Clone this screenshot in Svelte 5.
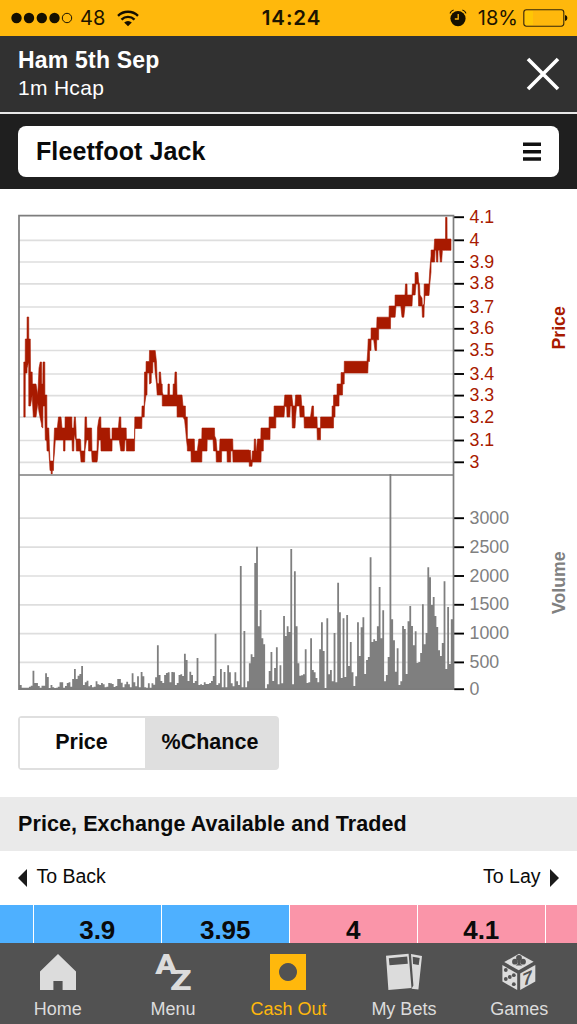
<script>
  const runner = 'Fleetfoot Jack';

  const priceTicks = [
    { label: '4.1', y: 28.2 },
    { label: '4', y: 51.3 },
    { label: '3.9', y: 73 },
    { label: '3.8', y: 94.8 },
    { label: '3.7', y: 118 },
    { label: '3.6', y: 139.8 },
    { label: '3.5', y: 161.5 },
    { label: '3.4', y: 185 },
    { label: '3.3', y: 206.6 },
    { label: '3.2', y: 228.2 },
    { label: '3.1', y: 251.5 },
    { label: '3', y: 273.3 }
  ];

  const volumeTicks = [
    { label: '3000', y: 329.2 },
    { label: '2500', y: 358.2 },
    { label: '2000', y: 387 },
    { label: '1500', y: 415.8 },
    { label: '1000', y: 444.6 },
    { label: '500', y: 473.4 },
    { label: '0', y: 500.2 }
  ];

  // x, high, low of the traded price band
  const band = [
    [23.8, 362, 417], [25.2, 362, 417], [25.3, 339, 373], [27, 339, 373], [27.1, 317, 368], [28.7, 317, 362],
    [28.8, 339, 406], [30.3, 339, 406], [30.5, 372, 406], [32.2, 372, 395], [32.4, 384, 400], [33.3, 384, 417],
    [36, 384, 417], [37.8, 395, 403], [39, 368, 412], [40.2, 362, 418], [41.5, 362, 424], [41.7, 384, 427],
    [42.8, 384, 428], [43, 362, 406], [44.8, 362, 406], [44.9, 395, 418], [45.3, 395, 440], [46.8, 395, 441],
    [47, 428, 451], [48.8, 428, 451], [49.5, 450, 461], [50, 461, 470.5], [51.1, 461, 470.5], [51.2, 461, 474],
    [52.2, 461, 474], [52.3, 461, 470.5], [53.5, 461, 470.5], [53.6, 450, 462], [54.5, 428, 452], [55.3, 428, 440],
    [57.3, 428, 440], [58.5, 417, 440], [61, 417, 440], [62, 428, 440], [63.4, 428, 440], [63.5, 428, 451],
    [65, 428, 451], [65.1, 417, 440], [71.8, 417, 440], [72, 428, 440], [72.3, 428, 451], [73.8, 428, 451],
    [74, 422, 440], [74.4, 417, 434], [75.4, 417, 439], [76, 428, 440], [76.3, 439, 451], [80, 439, 451],
    [80.6, 440, 456], [81, 451, 462], [84.5, 451, 462], [84.7, 439, 462], [85, 417, 450], [86.5, 417, 440],
    [86.8, 428, 440], [88.5, 428, 440], [88.6, 428, 451], [91.6, 428, 451], [92, 451, 460], [92.3, 451, 462],
    [97, 451, 462], [97.5, 428, 459], [98.7, 420, 440], [99.5, 417, 440], [100.8, 417, 440], [101, 428, 451],
    [109.7, 428, 451], [110, 439, 451], [112, 439, 451], [112.1, 428, 440], [118.4, 428, 440], [119.3, 417, 440],
    [120.8, 417, 451], [121, 428, 451], [124.3, 428, 451], [125, 428, 440], [126.2, 428, 440], [126.4, 439, 451],
    [134.5, 439, 451], [134.8, 417, 428.5], [141.8, 417, 428.5], [142, 406, 417], [144.2, 406, 417], [144.5, 372, 406],
    [146, 372, 395], [146.1, 361.5, 395], [147, 361.5, 395], [147.2, 361.5, 373], [149.3, 361.5, 373], [149.5, 350.5, 384],
    [151.2, 350.5, 383], [151.3, 350.5, 373], [152.7, 350.5, 373], [152.9, 350.5, 362], [154.5, 350.5, 362],
    [155.2, 350.5, 373], [156.5, 362, 384], [157.2, 383, 395], [159, 384, 395], [159.2, 372, 395], [160.5, 372, 395],
    [161.3, 384, 395], [162.2, 384, 395], [162.3, 392, 406], [163.2, 395, 406], [167.8, 395, 406], [168, 384, 406],
    [169.4, 384, 406], [169.6, 395, 406], [173, 395, 406], [173.2, 384, 406], [174.6, 384, 406], [175, 372, 406],
    [176.5, 372, 406], [177, 395, 406], [177.1, 395, 417], [182, 395, 417], [183, 406, 417], [184.6, 406, 420],
    [185.4, 406, 428], [185.5, 417, 428], [186.4, 417, 439], [187.3, 417, 447], [187.4, 439, 451], [191, 439, 451],
    [191.2, 439, 462], [194.3, 439, 462], [194.6, 451, 462], [197.3, 451, 462], [198.8, 439, 462], [201.8, 439, 462],
    [202, 428, 451], [207, 428, 451], [207.2, 428, 439.5], [213, 428, 439.5], [213.6, 428, 451], [214.5, 428, 451],
    [214.7, 436, 451], [216, 439, 451], [216.3, 442, 462], [217, 451, 462], [219.5, 451, 462], [220, 439, 462],
    [221.5, 439, 462], [221.7, 439, 451], [227, 439, 451], [227.2, 439, 462], [230.7, 439, 462], [230.8, 439, 451],
    [232.7, 439, 451], [233, 450, 462], [249.2, 450, 462], [249.3, 451, 466.3], [250.3, 450, 466.3], [251, 460, 466.3],
    [252, 460, 466.3], [252.3, 451, 462], [254, 451, 462], [254.3, 439, 462], [255.6, 439, 462], [256, 451, 462],
    [256.4, 451, 462], [257.5, 439, 462], [260.8, 439, 462], [261, 428, 462], [261.2, 428, 451], [263.3, 428, 451],
    [263.4, 428, 439.5], [269, 428, 439.5], [269.1, 417, 439.5], [270, 417, 439.5], [270.1, 417, 428], [274, 417, 428],
    [274.1, 406, 428], [275.8, 406, 428], [275.9, 406, 417], [284, 406, 417], [284.8, 395, 406], [286.7, 395, 407],
    [287, 395, 417], [289.8, 395, 417], [290.3, 395, 406], [291.8, 395, 406], [292.3, 400, 428], [293, 406, 428],
    [295, 406, 428], [295.6, 395, 417], [296.5, 395, 406], [299.5, 395, 406], [300, 395, 417], [301, 395, 417],
    [301.8, 406, 417], [304, 406, 417], [304.3, 417, 428], [310.5, 417, 428], [312, 406, 428], [313.5, 406, 428],
    [313.7, 417, 428], [317, 417, 428], [317.3, 428, 439.8], [320.5, 428, 439.8], [320.6, 417, 428],
    [332, 417, 428], [332.1, 406, 428], [333.5, 406, 428], [333.6, 395, 417], [335, 395, 417], [335.1, 395, 406],
    [337, 395, 406], [337.1, 384, 406], [339, 384, 406], [339.1, 384, 395], [341, 384, 395], [341.1, 372.5, 395],
    [342.5, 372.5, 395], [342.7, 372.5, 384], [344.2, 372.5, 384], [344.3, 361.3, 373], [367, 361.3, 373],
    [367.8, 350, 373], [368.2, 339, 361.5], [369.5, 339, 361.5], [369.6, 339, 350.5], [371, 339, 350.5],
    [371.1, 328, 339.8], [373.7, 328, 339.8], [375, 328, 350.5], [376.6, 328, 350.5], [376.7, 328, 339.8],
    [377, 317.2, 339.8], [378.6, 317.2, 339.8], [378.7, 317.2, 328.7], [389, 317.2, 328.7], [389.2, 306, 328.7],
    [390.5, 306, 328.7], [390.6, 306, 317.2], [395, 306, 317.2], [395.1, 295, 317.2], [396, 295, 306],
    [400.8, 295, 306], [402, 295, 317.2], [403.8, 295, 317.2], [405, 295, 306],
    [405.5, 284, 306], [407, 284, 306], [407.2, 295, 306], [412, 295, 306], [412.5, 284, 295], [415, 284, 295],
    [415.1, 272.5, 295], [416, 272.5, 284], [418, 272.5, 284], [418.6, 282, 306], [419.5, 284, 306], [420, 295, 306],
    [422, 298, 306], [422.4, 306, 317.2], [424, 304, 317.2], [424.2, 284, 306], [425, 284, 295.5], [429, 284, 295.5],
    [429.8, 270, 284], [431, 256, 272], [431.1, 250, 262], [434, 250, 262], [434.6, 239, 262], [435, 239, 250.3],
    [436, 239, 250.3], [436.6, 239, 262], [437.8, 239, 262], [438.1, 239, 250.3], [439.5, 239, 250.3], [440.3, 239, 262],
    [441.6, 239, 262], [442.4, 239, 250.3], [445.5, 239, 250.3], [445.6, 217.3, 250.3], [447, 217.3, 250.3],
    [447.1, 239, 250.3], [451, 239, 250.3]
  ];

  const volumes = [
    12, 12, 4, 4, 4, 4, 7, 10, 55, 18, 18, 9, 4, 10, 10, 47, 36, 3, 12, 5,
    3, 4, 7, 20, 20, 4, 9, 18, 20, 7, 30, 60, 30, 40, 45, 69, 12, 20, 25, 8,
    12, 5, 7, 23, 14, 12, 18, 14, 5, 7, 18, 17, 15, 6, 9, 30, 30, 19, 5, 14,
    22, 14, 5, 47, 20, 8, 38, 5, 51, 38, 5, 4, 17, 4, 17, 13, 35, 131, 42, 24,
    18, 42, 48, 50, 20, 51, 50, 12, 18, 42, 44, 39, 106, 87, 24, 52, 42, 18, 24, 93,
    12, 14, 12, 20, 15, 15, 18, 24, 39, 166, 12, 17, 60, 5, 51, 5, 71, 50, 17, 8,
    50, 23, 12, 369, 5, 174, 5, 23, 77, 104, 96, 378, 427, 188, 237, 152, 134, 0, 14, 54,
    111, 24, 63, 125, 14, 71, 17, 219, 159, 188, 171, 420, 14, 353, 188, 77, 40, 41, 44, 119,
    18, 20, 152, 57, 50, 33, 20, 119, 200, 114, 3, 212, 44, 57, 23, 168, 20, 319, 230, 33,
    212, 36, 222, 69, 141, 50, 9, 38, 200, 99, 185, 215, 45, 87, 96, 395, 141, 149, 144, 188,
    306, 152, 236, 23, 42, 96, 645, 209, 146, 52, 122, 12, 23, 189, 180, 45, 203, 249, 189, 131,
    173, 78, 81, 108, 254, 134, 168, 365, 335, 252, 276, 219, 186, 116, 99, 138, 323, 60, 246, 75,
    209, 209
  ];

  const top = 189;
  const base = 500;
  const step = 1.803;

  const pricePath =
    'M' + band.map(([x, high]) => `${x} ${high - top}`).join('L') +
    'L' + [...band].reverse().map(([x, , low]) => `${x} ${low - top}`).join('L') + 'Z';

  const volumePath =
    `M19 ${base}` +
    volumes
      .map((v, i) => {
        const left = Math.max(19, 19 + (i - 0.5) * step);
        const right = Math.min(453.5, 19 + (i + 0.5) * step);
        return `L${left.toFixed(2)} ${(base - v / 3).toFixed(2)}H${right.toFixed(2)}`;
      })
      .join('') +
    `V${base}Z`;

  const prices = [
    { value: '', side: 'back' },
    { value: '3.9', side: 'back' },
    { value: '3.95', side: 'back' },
    { value: '4', side: 'lay' },
    { value: '4.1', side: 'lay' },
    { value: '', side: 'lay' }
  ];

  const tabs = ['Home', 'Menu', 'Cash Out', 'My Bets', 'Games'];

  let mode = $state('Price');
  let active = $state('Cash Out');
</script>

<div class="screen">
  <div class="status">
    <div class="signal">
      <svg width="62" height="14" viewBox="0 0 62 14">
        {#each [5.5, 18, 30.8, 43.5] as cx}
          <circle {cx} cy="7" r="5.2" />
        {/each}
        <circle cx="56" cy="7" r="4.7" fill="none" stroke="#1c1400" />
      </svg>
      <span>48</span>
      <svg class="wifi" width="22" height="17" viewBox="0 0 22 17">
        <g fill="none" stroke="#150f00" stroke-width="2.4">
          <path d="M1 5.8a14.3 14.3 0 0 1 20 0" />
          <path d="M4.5 9.6a9.2 9.2 0 0 1 13 0" />
        </g>
        <path d="M7.2 12.5a5.4 5.4 0 0 1 7.6 0L11 16.3z" />
      </svg>
    </div>
    <strong>14:24</strong>
    <div class="power">
      <svg width="18" height="18" viewBox="0 0 18 18">
        <circle cx="9" cy="9.6" r="7.6" />
        <path d="M1 4.4Q1.8 1.8 4.6 1M17 4.4Q16.2 1.8 13.4 1" fill="none" stroke="#150f00" stroke-width="1.2" />
        <path d="M9.2 5v5H5.8" fill="none" stroke="#ffb80c" stroke-width="1.3" />
      </svg>
      <span>18%</span>
      <svg width="45" height="18" viewBox="0 0 45 18">
        <rect x="2" y="2" width="8" height="14" fill="#ffc605" />
        <rect x=".8" y=".8" width="40" height="16.4" rx="2.6" fill="none" stroke="#35270a" stroke-width="1.1" />
        <path d="M42 6q2.4.4 2.4 3T42 12z" />
      </svg>
    </div>
  </div>

  <header>
    <div>
      <h1>Ham 5th Sep</h1>
      <p>1m Hcap</p>
    </div>
    <button class="close" aria-label="Close">
      <svg width="34" height="34" viewBox="0 0 34 34">
        <path d="M2 2l30 30M32 2L2 32" stroke="#fff" stroke-width="3.6" />
      </svg>
    </button>
  </header>

  <div class="picker">
    <button class="runner">
      {runner}
      <svg width="18" height="20" viewBox="0 0 18 20">
        <path d="M0 2.3h18M0 9.7h18M0 17h18" stroke="#111" stroke-width="3.5" />
      </svg>
    </button>
  </div>

  <svg class="chart" width="577" height="527" viewBox="0 0 577 527">
    <g stroke="#dedede" stroke-width="1.7">
      {#each [...priceTicks.slice(1), ...volumeTicks.slice(0, -1)] as tick}
        <line x1="19" x2="453" y1={tick.y} y2={tick.y} />
      {/each}
    </g>
    <path d={volumePath} fill="#7f7f7f" />
    <path d={pricePath} fill="#a81a00" stroke="#a81a00" stroke-width=".6" />
    <path d="M19 26.6H453.5V500.2H19ZM19 286H453.5" fill="none" stroke="#7d7d7d" stroke-width="1.7" />
    <g stroke="#000" stroke-width="1.9">
      {#each [...priceTicks, ...volumeTicks] as tick}
        <line x1="454.2" x2="464" y1={tick.y} y2={tick.y} />
      {/each}
    </g>
    <g class="price">
      {#each priceTicks as tick}
        <text x="469.5" y={tick.y + 5.5}>{tick.label}</text>
      {/each}
      <text class="axis" transform="translate(564.5 160.5) rotate(-90)">Price</text>
    </g>
    <g class="volume">
      {#each volumeTicks as tick}
        <text x="469.5" y={tick.y + 5.5}>{tick.label}</text>
      {/each}
      <text class="axis" transform="translate(564.5 425) rotate(-90)">Volume</text>
    </g>
  </svg>

  <div class="toggle">
    {#each ['Price', '%Chance'] as option}
      <button class:selected={mode === option} onclick={() => (mode = option)}>{option}</button>
    {/each}
  </div>

  <h2>Price, Exchange Available and Traded</h2>

  <div class="directions">
    <span>
      <svg width="9" height="18" viewBox="0 0 9 18"><path d="M9 0v18L0 9z" /></svg>
      To Back
    </span>
    <span>
      To Lay
      <svg width="9" height="18" viewBox="0 0 9 18"><path d="M0 0v18l9-9z" /></svg>
    </span>
  </div>

  <div class="prices">
    {#each prices as price}
      <div class={price.side}>{price.value}</div>
    {/each}
  </div>

  <nav>
    {#each tabs as tab}
      <button class:active={active === tab} onclick={() => (active = tab)}>
        <svg width="38" height="38" viewBox="0 0 38 38">
          {#if tab === 'Home'}
            <path d="M19 1L37 18.5V37H23.6V28H14.4V37H1V18.5z" />
          {:else if tab === 'Menu'}
            <text class="letter" x="1.2" y="21" textLength="22" lengthAdjust="spacingAndGlyphs">A</text>
            <text class="letter" x="16" y="36.8" textLength="21.5" lengthAdjust="spacingAndGlyphs">Z</text>
          {:else if tab === 'Cash Out'}
            <path fill-rule="evenodd" d="M1 1H37V37H1zM19 10a9 9 0 1 0 .01 0z" />
          {:else if tab === 'My Bets'}
            <path fill-rule="evenodd" d="M1 2.8L23.6.8 26.5 35 3.4 37zM3.8 5.2L4.5 12.3 22.8 10.7 22.2 3.6z" />
            <path fill-rule="evenodd" d="M26 1L37 3 33.4 36.5 26.5 35.8 28.4 32.5zM27.7 3.7L28 11.1 33.7 12 34.7 5z" />
          {:else}
            <path d="M19 .8L33.6 8.8 18.7 17.3 4.2 9z" />
            <path d="M2.4 12L17.2 20.6V37L2.4 28.6z" />
            <path d="M35.3 12L20.2 20.6V37L35.3 28.6z" />
            <g class="cut">
              <circle cx="19" cy="5" r="2.9" />
              <circle cx="15" cy="8.7" r="2.9" />
              <circle cx="23" cy="8.7" r="2.9" />
              <path d="M18.3 6h1.5l.5 5 2 1.5h-6.6l2-1.5z" />
              <circle cx="5.8" cy="17" r="1.9" />
              <circle cx="5.8" cy="26" r="1.9" />
              <circle cx="9.8" cy="24" r="1.9" />
              <circle cx="13.8" cy="22.2" r="1.9" />
              <circle cx="13.8" cy="31.2" r="1.9" />
              <text class="seven" transform="translate(22.6 33.4) skewY(-24)">7</text>
            </g>
          {/if}
        </svg>
        <span>{tab}</span>
      </button>
    {/each}
  </nav>
</div>

<style>
  :global(body) {
    background: #fff;
    overflow: hidden;
  }

  .screen {
    width: 577px;
    height: 1024px;
    display: flex;
    flex-direction: column;
    font-family: "Liberation Sans", Arial, sans-serif;
    color: #0a0a0a;
    overflow: hidden;
  }

  .screen > * {
    flex-shrink: 0;
    box-sizing: border-box;
  }

  button {
    border: 0;
    padding: 0;
    margin: 0;
    background: none;
    font: inherit;
    color: inherit;
  }

  svg {
    display: block;
  }

  .status {
    height: 36px;
    padding: 0 9px 0 11px;
    display: grid;
    grid-template-columns: 1fr auto 1fr;
    align-items: center;
    background: #ffb80c;
    font: 20px/36px Inter, Roboto, sans-serif;
    color: #1c1400;
    fill: #150f00;
  }

  .status strong {
    margin-left: 4px;
    font-size: 20.5px;
    font-weight: 600;
    letter-spacing: 0.9px;
  }

  .signal, .power {
    display: flex;
    align-items: center;
  }

  .signal span {
    margin: 0 12px 0 7px;
  }

  .power {
    justify-content: flex-end;
  }

  .power span {
    margin: 0 5px 0 11px;
  }

  header {
    height: 78px;
    padding: 10px 18px 0;
    display: flex;
    justify-content: space-between;
    background: #313131;
    border-bottom: 2px solid #e8e8e8;
    color: #fff;
  }

  h1 {
    margin: 0;
    font-size: 23px;
    letter-spacing: 0.2px;
    line-height: 28px;
  }

  header p {
    margin: 0;
    font-size: 21px;
    letter-spacing: 0.3px;
    line-height: 27px;
  }

  .close {
    align-self: flex-start;
    margin: 11px -1px 0 0;
  }

  .picker {
    height: 75px;
    padding: 12px 18px;
    background: #1f1f1f;
  }

  .runner {
    width: 541px;
    height: 51px;
    padding: 0 18px;
    display: flex;
    align-items: center;
    justify-content: space-between;
    border-radius: 8px;
    background: #fff;
    font-size: 25px;
    font-weight: bold;
    letter-spacing: 0.1px;
  }

  .chart text {
    font-size: 17.8px;
  }

  .chart .axis {
    font-size: 17.7px;
    font-weight: bold;
  }

  .price {
    fill: #a81a00;
  }

  .volume {
    fill: #808080;
  }

  .toggle {
    width: 261px;
    height: 54px;
    margin-left: 18px;
    display: grid;
    grid-template-columns: 125px 1fr;
    border: 2px solid #dfdfdf;
    border-radius: 4px;
    background: #dfdfdf;
    font-size: 21.5px;
    font-weight: bold;
  }

  .toggle button {
    padding: 0 2px 2px 0;
  }

  .toggle .selected {
    background: #fff;
  }

  h2 {
    height: 54px;
    margin: 27px 0 0;
    padding-left: 18px;
    background: #eaeaea;
    font-size: 21.5px;
    letter-spacing: 0.09px;
    line-height: 54px;
  }

  .directions {
    height: 54px;
    padding: 0 18px;
    display: flex;
    justify-content: space-between;
    font-size: 19.5px;
    line-height: 50px;
  }

  .directions span {
    height: 50px;
    display: flex;
    align-items: center;
    gap: 9.5px;
  }

  .directions svg {
    margin-top: 4px;
    fill: #1a1a1a;
  }

  .prices {
    height: 38px;
    display: grid;
    grid-template-columns: 32.5px repeat(4, 126.5px) 1fr;
    gap: 1.5px;
    font-size: 26px;
    font-weight: bold;
    line-height: 26px;
    text-align: center;
  }

  .prices div {
    padding-top: 12px;
  }

  .back {
    background: #4eb0ff;
  }

  .lay {
    background: #fa95a9;
  }

  nav {
    height: 81px;
    padding-top: 10px;
    display: grid;
    grid-template-columns: repeat(5, 1fr);
    background: #525252;
    color: #dcdcdc;
    fill: #dcdcdc;
    font-size: 18px;
  }

  nav button {
    display: flex;
    flex-direction: column;
    align-items: center;
    gap: 8px;
    line-height: 21px;
  }

  nav .active {
    color: #ffb80c;
    fill: #ffb80c;
  }

  .letter {
    font: 900 27.5px Roboto, "Liberation Sans", sans-serif;
  }

  .cut {
    fill: #525252;
  }

  .seven {
    font: bold 18px "Liberation Sans", sans-serif;
  }
</style>
